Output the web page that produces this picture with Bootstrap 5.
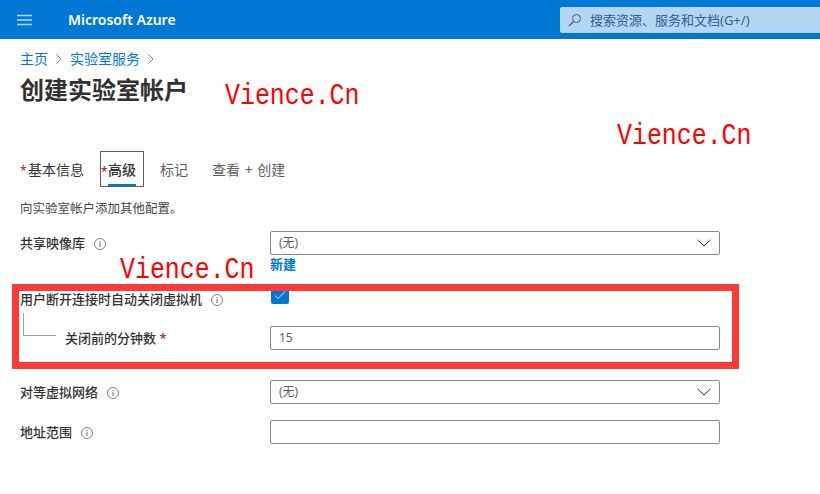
<!DOCTYPE html>
<html lang="zh-CN">
<head>
<meta charset="utf-8">
<title>创建实验室帐户</title>
<link href="https://cdn.jsdelivr.net/npm/bootstrap@5.3.0/dist/css/bootstrap.min.css" rel="stylesheet">
<style>
html,body{height:494px;overflow:hidden}
body{position:relative;background:#fff;color:#323130;font-family:"Noto Sans","Noto Sans CJK SC",sans-serif;font-size:13px;line-height:16px}
.topbar{height:39px;background:#0078d4;color:#fff}
.burger{width:16px;margin-left:17px;margin-right:35px}
.brand{font-size:14px;font-weight:600;width:492px}
.searchbox{width:260px;height:26px;background:#b3d6f2;border-radius:2px 0 0 2px;padding-left:8px;color:#2f5f8f;font-size:13px;gap:8px}
.content{padding:0 100px 0 20px}
.crumbs{padding-top:9px;height:30px;color:#0078d4;font-size:14px}
.crumbs svg{margin:0 8px}
.pagetitle{font-size:24px;line-height:32px;font-weight:700;margin:0;height:82px;padding-top:5px;color:#323130}
.tabs{height:36px;font-size:14px}
.tabitem{height:36px;display:flex;align-items:center;justify-content:center;position:relative;color:#323130;padding-top:2px}
.tabone{width:80px;justify-content:flex-start}
.tabtwo{width:44px;border:1px solid #605e5c;font-weight:500}
.tabtwo::after{content:"";position:absolute;left:7px;right:7px;bottom:0;height:2px;background:#0078d4}
.tabthree{width:60px;color:#605e5c}
.tabfour{width:auto;margin-left:8px;color:#605e5c;word-spacing:1px}
.req{color:#a4262c}
.tabstar{position:absolute;left:0;top:12px;font-size:12px}
.desc{margin-top:14px;height:16px;font-size:12.5px;color:#484644}
.formrow{display:flex;align-items:center}
.labelcol{width:250px;flex:none;font-weight:500;font-size:13px}
.fieldcol{width:450px;flex:none}
.fakefield{height:24px;border:1px solid #8a8886;border-radius:2px;padding:0 8px;display:flex;align-items:center;justify-content:space-between;background:#fff;font-size:12px;color:#605e5c}
.infomark{display:inline-block;vertical-align:-2px;margin-left:9px}
.newlink{color:#0078d4;font-weight:700;font-size:13px;line-height:16px;margin-top:1px;height:16px}
.tickbox{width:18px;height:18px;background:#0078d4;border-radius:2px;margin-left:1px;margin-top:-5px;display:flex;align-items:center;justify-content:center}
.row1{margin-top:14px}
.row2{margin-top:19px;align-items:flex-start;height:20px}
.row3{margin-top:15px;height:24px;position:relative}
.row4{margin-top:30px}
.row5{margin-top:16px}
.indent{padding-left:45px}
.connector{position:absolute;left:3px;top:-13px;width:33px;height:23px;border-left:1px solid #a19f9d;border-bottom:1px solid #a19f9d}
.redframe{position:absolute;left:12px;top:284px;width:727px;height:85px;border:7px solid #ff3838;pointer-events:none}
.stamp{position:absolute;color:#ff0000;font-family:"Liberation Mono",monospace;font-size:30px;line-height:30px;transform:scaleX(.83);transform-origin:left top;white-space:nowrap}
.stampa{left:225px;top:81px}
.stampb{left:617px;top:121px}
.stampc{left:120px;top:255px}
</style>
</head>
<body>
<header class="topbar d-flex align-items-center">
  <svg class="burger" viewBox="0 0 16 12" height="12" aria-hidden="true"><path d="M0 1.5h15M0 6h15M0 10.500h15" stroke="#b8d9f3" stroke-width="1.500" fill="none"/></svg>
  <div class="brand">Microsoft Azure</div>
  <div class="searchbox d-flex align-items-center">
    <svg width="14" height="14" viewBox="0 0 14 14" aria-hidden="true"><circle cx="8.500" cy="5.500" r="4" fill="none" stroke="#2f5f8f" stroke-width="1"/><path d="M5.500 8.500L1 13" stroke="#2f5f8f" stroke-width="1.200"/></svg>
    <span>搜索资源、服务和文档(G+/)</span>
  </div>
</header>
<main class="content">
  <nav class="crumbs d-flex align-items-center">
    <span>主页</span>
    <svg width="6" height="10" viewBox="0 0 6 10" aria-hidden="true"><path d="M.5 .5L5 5L.5 9.500" fill="none" stroke="#8a8886"/></svg>
    <span>实验室服务</span>
    <svg width="6" height="10" viewBox="0 0 6 10" aria-hidden="true"><path d="M.5 .5L5 5L.5 9.500" fill="none" stroke="#8a8886"/></svg>
  </nav>
  <h1 class="pagetitle">创建实验室帐户</h1>
  <div class="tabs d-flex">
    <div class="tabitem tabone"><span class="req tabstar">*</span><span class="ps-2">基本信息</span></div>
    <div class="tabitem tabtwo"><span class="req tabstar">*</span><span>高级</span></div>
    <div class="tabitem tabthree"><span>标记</span></div>
    <div class="tabitem tabfour">查看 + 创建</div>
  </div>
  <p class="desc mb-0">向实验室帐户添加其他配置。</p>

  <div class="formrow row1">
    <div class="labelcol">共享映像库<svg class="infomark" width="12" height="12" viewBox="0 0 12 12" aria-hidden="true"><circle cx="6" cy="6" r="5.500" fill="none" stroke="#605e5c" stroke-width=".8"/><path d="M6 5.200V9M6 3v1.200" stroke="#605e5c"/></svg></div>
    <div class="fieldcol"><div class="fakefield"><span>(无)</span><svg width="14" height="8" viewBox="0 0 14 8" aria-hidden="true"><path d="M.5 .8L7 7L13.500 .8" fill="none" stroke="#323130"/></svg></div></div>
  </div>
  <div class="formrow"><div class="labelcol"></div><div class="fieldcol newlink">新建</div></div>

  <div class="formrow row2">
    <div class="labelcol">用户断开连接时自动关闭虚拟机<svg class="infomark" width="12" height="12" viewBox="0 0 12 12" aria-hidden="true"><circle cx="6" cy="6" r="5.500" fill="none" stroke="#605e5c" stroke-width=".8"/><path d="M6 5.200V9M6 3v1.200" stroke="#605e5c"/></svg></div>
    <div class="fieldcol"><div class="tickbox"><svg width="12" height="10" viewBox="0 0 12 10" aria-hidden="true"><path d="M1 5.500L4 8.500L11 1.500" fill="none" stroke="#fff" stroke-width=".8"/></svg></div></div>
  </div>
  <div class="formrow row3">
    <div class="connector"></div>
    <div class="labelcol indent">关闭前的分钟数 <span class="req">*</span></div>
    <div class="fieldcol"><div class="fakefield"><span>15</span></div></div>
  </div>

  <div class="formrow row4">
    <div class="labelcol">对等虚拟网络<svg class="infomark" width="12" height="12" viewBox="0 0 12 12" aria-hidden="true"><circle cx="6" cy="6" r="5.500" fill="none" stroke="#605e5c" stroke-width=".8"/><path d="M6 5.200V9M6 3v1.200" stroke="#605e5c"/></svg></div>
    <div class="fieldcol"><div class="fakefield"><span>(无)</span><svg width="14" height="8" viewBox="0 0 14 8" aria-hidden="true"><path d="M.5 .8L7 7L13.500 .8" fill="none" stroke="#323130"/></svg></div></div>
  </div>
  <div class="formrow row5">
    <div class="labelcol">地址范围<svg class="infomark" width="12" height="12" viewBox="0 0 12 12" aria-hidden="true"><circle cx="6" cy="6" r="5.500" fill="none" stroke="#605e5c" stroke-width=".8"/><path d="M6 5.200V9M6 3v1.200" stroke="#605e5c"/></svg></div>
    <div class="fieldcol"><div class="fakefield"></div></div>
  </div>
</main>
<div class="redframe"></div>
<div class="stamp stampa">Vience.Cn</div>
<div class="stamp stampb">Vience.Cn</div>
<div class="stamp stampc">Vience.Cn</div>
<script src="https://cdn.jsdelivr.net/npm/bootstrap@5.3.0/dist/js/bootstrap.bundle.min.js"></script>
</body>
</html>
